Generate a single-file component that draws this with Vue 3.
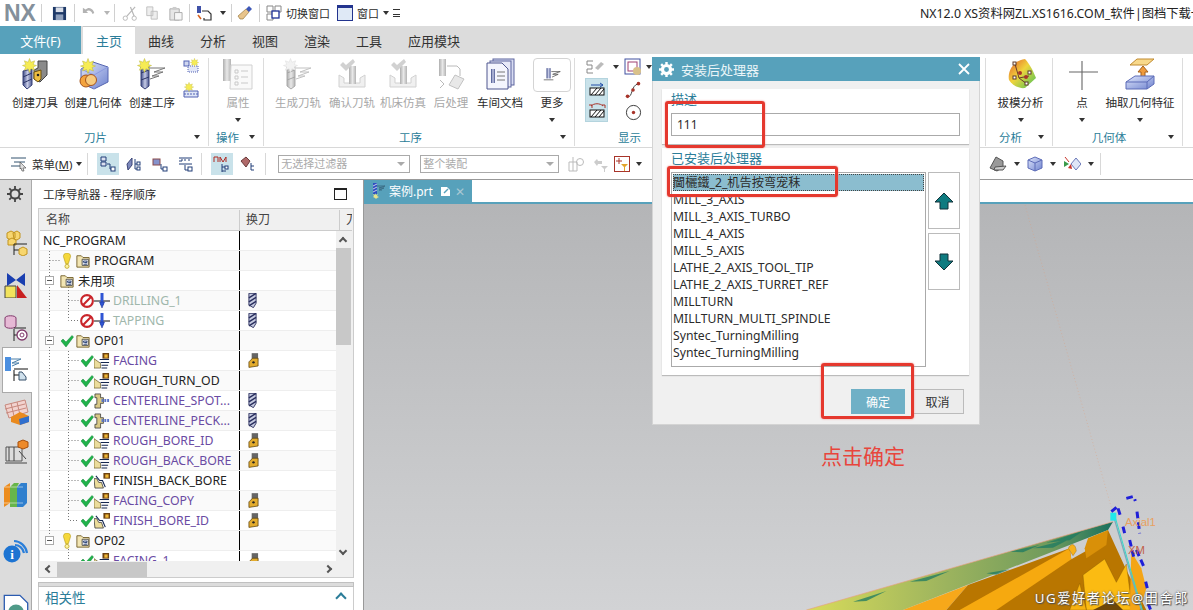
<script setup>
const tabs = ['曲线', '分析', '视图', '渲染', '工具', '应用模块']

// quick access strip, ml is the gap in front of each item
const quick = [
  { sep: true, ml: 0 },
  { icon: 'floppy', size: 15, ml: 10 },
  { sep: true, ml: 7 },
  { icon: 'undo', size: 14, ml: 7 },
  { caret: true, faint: true, ml: 8 },
  { sep: true, ml: 4 },
  { icon: 'cut', size: 15, ml: 7 },
  { icon: 'copy', size: 14, ml: 8 },
  { icon: 'paste', size: 15, ml: 9 },
  { sep: true, ml: 6 },
  { icon: 'job', size: 16, ml: 6 },
  { caret: true, ml: 8 },
  { sep: true, ml: 5 },
  { icon: 'eraser', size: 16, ml: 5 },
  { sep: true, ml: 6 },
  { icon: 'winswitch', size: 16, ml: 6 },
  { text: '切换窗口', ml: 4 },
  { icon: 'win', size: 16, ml: 7 },
  { text: '窗口', ml: 4 },
  { caret: true, ml: 4 },
]

const opButtons = [
  { label: '生成刀轨', icon: 'oper', w: 50, off: true },
  { label: '确认刀轨', icon: 'verify', w: 58, off: true },
  { label: '机床仿真', icon: 'verify', w: 44, off: true },
  { label: '后处理', icon: 'post', w: 52, off: true },
  { label: '车间文档', icon: 'doc', w: 46, off: false },
]

const ok = 'check'
const rows = [
  { name: 'NC_PROGRAM', lvl: 0 },
  { name: 'PROGRAM', lvl: 1, status: 'bulb', icon: 'folder' },
  { name: '未用项', lvl: 1, toggle: true, icon: 'folder' },
  { name: 'DRILLING_1', lvl: 2, status: 'no', icon: 'drillop', tone: 'muted', tool: 'bit' },
  { name: 'TAPPING', lvl: 2, status: 'no', icon: 'drillop', tone: 'muted', tool: 'bit' },
  { name: 'OP01', lvl: 1, toggle: true, status: ok, icon: 'folder' },
  { name: 'FACING', lvl: 2, status: ok, icon: 'faceop', tone: 'violet', tool: 'insert' },
  { name: 'ROUGH_TURN_OD', lvl: 2, status: ok, icon: 'faceop' },
  { name: 'CENTERLINE_SPOT...', lvl: 2, status: ok, icon: 'centerop', tone: 'violet', tool: 'bit' },
  { name: 'CENTERLINE_PECK...', lvl: 2, status: ok, icon: 'centerop', tone: 'violet', tool: 'bit' },
  { name: 'ROUGH_BORE_ID', lvl: 2, status: ok, icon: 'faceop', tone: 'violet', tool: 'insert' },
  { name: 'ROUGH_BACK_BORE', lvl: 2, status: ok, icon: 'faceop', tone: 'violet', tool: 'insert' },
  { name: 'FINISH_BACK_BORE', lvl: 2, status: ok, icon: 'finishop' },
  { name: 'FACING_COPY', lvl: 2, status: ok, icon: 'faceop', tone: 'violet', tool: 'insert' },
  { name: 'FINISH_BORE_ID', lvl: 2, status: ok, icon: 'finishop', tone: 'violet', tool: 'insert' },
  { name: 'OP02', lvl: 1, toggle: true, status: 'bulb', icon: 'folder' },
  { name: 'FACING_1', lvl: 2, status: ok, icon: 'faceop', tone: 'violet', tool: 'insert' },
]

const posts = [
  'MILL_3_AXIS', 'MILL_3_AXIS_TURBO', 'MILL_4_AXIS', 'MILL_5_AXIS',
  'LATHE_2_AXIS_TOOL_TIP', 'LATHE_2_AXIS_TURRET_REF', 'MILLTURN',
  'MILLTURN_MULTI_SPINDLE', 'Syntec_TurningMilling', 'Syntec_TurningMilling',
]

const railIcons = ['railasm', 'railcon', 'railmach', 'railnav', 'railtable', 'railkin', 'railbook', 'railinfo', 'railweb']
</script>

<template>
  <div class="app">
    <svg width="0" height="0" class="defs">
      <defs>
        <linearGradient id="bluebody" x1="0" y1="0" x2="1" y2="1"><stop offset="0" stop-color="#dfe6fb"/><stop offset="1" stop-color="#6f83cf"/></linearGradient>
        <linearGradient id="steel" x1="0" y1="0" x2="1" y2="0"><stop offset="0" stop-color="#3d4a86"/><stop offset=".5" stop-color="#c6cbe6"/><stop offset="1" stop-color="#4b5690"/></linearGradient>
        <linearGradient id="heat" x1="0" y1="0" x2="1" y2="1"><stop offset="0" stop-color="#e35a2b"/><stop offset=".45" stop-color="#f0d43c"/><stop offset="1" stop-color="#46c25a"/></linearGradient>
        <linearGradient id="partgrad" x1="0" y1="0" x2="1" y2="0"><stop offset="0" stop-color="#d9dc5a"/><stop offset=".45" stop-color="#9db45e"/><stop offset=".8" stop-color="#6f9a5c"/><stop offset="1" stop-color="#17705e"/></linearGradient>

        <symbol id="star" viewBox="0 0 32 32"><path d="M16 1l3 8 8-3-3 8 7 2-7 3 3 7-8-3-3 8-3-8-8 3 3-7-7-3 7-2-3-8 8 3z" fill="#f6ec54" stroke="#b9b33a" stroke-width="1"/></symbol>
        <symbol id="tool" viewBox="0 0 32 32"><path d="M4 13l9-2v16l-5 4-4-4z" fill="url(#steel)" stroke="#384279"/><path d="M4 19l9-4M4 25l9-4" stroke="#2e3768"/><path d="M19 3h9v14l-7 7-6-3v-9l4-2z" fill="#8a8a8a" stroke="#444"/><path d="M15 14l7-2v9l-3 3-4-3z" fill="#eebe42" stroke="#6a5010"/><circle cx="19" cy="17" r="1.3" fill="#222"/><use href="#star" x="3" y="0" width="15" height="15"/></symbol>
        <symbol id="geom" viewBox="0 0 32 32"><path d="M4 11l12-7 15 5v15l-14 7-13-6z" fill="url(#bluebody)" stroke="#5565b0"/><path d="M4 11l13 6 14-8M17 17v14" stroke="#8a9ae0" fill="none"/><circle cx="9" cy="23" r="6" fill="#f3a33d" stroke="#a4541d"/><circle cx="14" cy="22" r="5.5" fill="#f8cb7d" stroke="#a4541d"/><use href="#star" x="3" y="0" width="16" height="16"/></symbol>
        <symbol id="oper" viewBox="0 0 32 32"><path d="M5 8h8v20l-4 3-4-3z" fill="url(#steel)" stroke="#384279"/><path d="M5 15l8-3M5 22l8-3" stroke="#2e3768"/><path d="M14 10h15l-11 4h9l-11 4h7l-9 3" fill="none" stroke="#777"/><use href="#star" x="1" y="0" width="15" height="15"/></symbol>
        <symbol id="verify" viewBox="0 0 32 32"><path d="M3 17v12h26V17l-5 3v5H8v-5z" fill="#ddd" stroke="#999"/><rect x="13" y="8" width="7" height="18" fill="url(#steel)"/><path d="M4 7l3-3 3 3 7-6 2 3-9 9z" fill="#999"/></symbol>
        <symbol id="post" viewBox="0 0 32 32"><rect x="4" y="1" width="7" height="17" fill="url(#steel)"/><path d="M12 8h10l3 3v7M5 22l4 4-4 4" fill="none" stroke="#666"/><path d="M14 27l6-10 9 4-6 10z" fill="#ccc" stroke="#777"/></symbol>
        <symbol id="doc" viewBox="0 0 32 32"><rect x="9" y="1" width="21" height="26" fill="#d8dcf2" stroke="#5d659e"/><rect x="6" y="3" width="21" height="26" fill="#e6e8f7" stroke="#5d659e"/><path d="M3 5h15l6 6v20H3z" fill="#f4f5fd" stroke="#4f578f"/><rect x="7" y="11" width="4" height="14" fill="url(#steel)"/><path d="M13 14h8M13 18h8M13 22h8" stroke="#777"/></symbol>
        <symbol id="attr" viewBox="0 0 32 32"><rect x="1" y="1" width="8" height="22" fill="url(#steel)"/><path d="M9 7h21v24H8z" fill="#f1f1f1" stroke="#999"/><path d="M13 12h3v3h-3zM13 18h3v3h-3zM13 24h3v3h-3zM19 13h7M19 19h7M19 25h7" fill="none" stroke="#888"/></symbol>
        <symbol id="more" viewBox="0 0 32 32"><rect x="8" y="6" width="6" height="15" fill="url(#steel)"/><path d="M4 23h14M15 11h13l-11 4h8l-9 4" fill="none" stroke="#444"/></symbol>
        <symbol id="draft" viewBox="0 0 32 32"><path d="M4 22C2 12 10 2 20 1c5 5 9 14 11 19l-11 10C14 31 7 27 4 22z" fill="url(#heat)"/><path d="M10 6l4 14 10-2M14 20l8 6" stroke="#6a3c2d" fill="none"/><g fill="#fff" stroke="#5d3a2b"><rect x="8" y="4" width="3" height="3"/><rect x="8" y="18" width="3" height="3"/><rect x="23" y="13" width="3" height="3"/><rect x="20" y="24" width="3" height="3"/></g><circle cx="15" cy="15" r="2" fill="#a8342a"/><circle cx="21" cy="19" r="2" fill="#a8342a"/></symbol>
        <symbol id="plus" viewBox="0 0 32 32"><path d="M16 3v29M3 14h29" stroke="#666" stroke-width="1.1"/></symbol>
        <symbol id="extract" viewBox="0 0 32 32"><path d="M6 7l7-6h17l-7 6z" fill="#f8d98b" stroke="#c08a30"/><path d="M19 8l5 6h-3v6h-4v-6h-3z" fill="#ef9b3c" stroke="#a4601c"/><path d="M2 24l9-6h19v8l-7 5H2z" fill="url(#bluebody)" stroke="#5d6cb8"/><path d="M2 24h21l7-6M23 24v7" fill="none" stroke="#5d6cb8"/></symbol>

        <symbol id="bulb" viewBox="0 0 14 18"><path d="M7 0c3 0 4 2 4 4L8.5 12h-3L3 4c0-2 1-4 4-4z" fill="#f5d83c" stroke="#b69b16" stroke-width=".7"/><circle cx="7" cy="15" r="2.3" fill="#fdf3a0" stroke="#b69b16" stroke-width=".8"/></symbol>
        <symbol id="no" viewBox="0 0 16 16"><circle cx="8" cy="8" r="6.700" fill="#fff" stroke="#c9252b" stroke-width="2.400"/><path d="M3.500 12.500l9-9" stroke="#c9252b" stroke-width="2.400"/></symbol>
        <symbol id="check" viewBox="0 0 14 14"><path d="M1 7l2-2 3 3 6-6.500 1.500 1.500L6 13z" fill="#1fb24a" stroke="#108536" stroke-width=".5"/></symbol>
        <symbol id="folder" viewBox="0 0 16 16"><path d="M1 2h5l2 2h7v11H1z" fill="#f2e5b3" stroke="#6e5a23"/><path d="M7 6h7v7H7z" fill="#fff" stroke="#444"/><path d="M8.500 8h4v1.500h-4zM10 10h2.500M8.500 11.700h4" fill="none" stroke="#223a70"/></symbol>
        <symbol id="drillop" viewBox="0 0 16 16"><path d="M0 8h16" stroke="#111"/><rect x="6.500" y="0" width="3" height="12" fill="#2f55d4"/><path d="M5.500 9h5l-2.500 6z" fill="#2f55d4" stroke="#1c2f88" stroke-width=".5"/></symbol>
        <symbol id="faceop" viewBox="0 0 17 17"><path d="M0 6l7 5v5H0z" fill="#ebdc9b" stroke="#5d4e1c" stroke-width=".7"/><path d="M6 7h10M7 10h9M8 13h7M8 16h6" stroke="#14264f" stroke-width="1.100"/><rect x="9" y="0" width="7" height="6" fill="#6d4210"/><rect x="11" y="1.500" width="3.500" height="3.500" fill="#f0b737"/></symbol>
        <symbol id="finishop" viewBox="0 0 17 17"><path d="M0 6h3l2 4h3l2 6H1z" fill="#ebdc9b" stroke="#333" stroke-width=".8"/><path d="M2 3l4 5h3l3 7" fill="none" stroke="#14264f" stroke-width="1.200"/><rect x="10" y="0" width="7" height="6" fill="#6d4210"/><rect x="12" y="1.500" width="3.500" height="3.500" fill="#f0b737"/></symbol>
        <symbol id="centerop" viewBox="0 0 17 17"><path d="M1 1h6v4h3v6H7v5H1v-4h2V5H1z" fill="#d9c987" stroke="#333" stroke-width=".8"/><path d="M8 8h8" stroke="#5b76c9" stroke-width="3" stroke-dasharray="2 1"/></symbol>
        <symbol id="bit" viewBox="0 0 10 16"><path d="M1 0h8v11l-3 5-5-3z" fill="#c5cae0" stroke="#2a2f5e"/><path d="M1 5l8-5M1 9.500l8-5M1 14l8-5" stroke="#2a2f5e" stroke-width="1.600"/></symbol>
        <symbol id="insert" viewBox="0 0 12 16"><rect x="4" y="0" width="7" height="9" fill="#666"/><path d="M1 9.500l4-4h6v8.500l-10 1.500z" fill="#e3ac2e" stroke="#5a420e" stroke-width=".8"/><circle cx="6" cy="10" r="1.300" fill="#222"/></symbol>

        <symbol id="gear" viewBox="0 0 16 16"><circle cx="8" cy="8" r="4.500" fill="none" stroke="currentColor" stroke-width="2"/><path d="M8 0v3M8 13v3M0 8h3M13 8h3M2.300 2.300l2 2M11.700 11.700l2 2M2.300 13.700l2-2M11.700 4.300l2-2" stroke="currentColor" stroke-width="1.800"/></symbol>
        <symbol id="gearsolid" viewBox="0 0 16 16"><circle cx="8" cy="8" r="4.300" fill="none" stroke="currentColor" stroke-width="3.400"/><path d="M8 0v3M8 13v3M0 8h3M13 8h3M2.300 2.300l2 2M11.700 11.700l2 2M2.300 13.700l2-2M11.700 4.300l2-2" stroke="currentColor" stroke-width="2.600"/></symbol>
        <symbol id="railasm" viewBox="0 0 24 26"><path d="M3 3l4-2 4 2v5l-4 2-4-2zM9 3l4-2 3 2v5l-3 2-3-1z" fill="#f7d66f" stroke="#c2941f"/><path d="M4 10l4-2 4 2v5H4z" fill="#f7d66f" stroke="#c2941f"/><path d="M10 14v11M10 20h6M10 14h13" stroke="#222"/><path d="M15 19l4-2 4 2v5l-4 2-4-2z" fill="#f7d66f" stroke="#c2941f"/></symbol>
        <symbol id="railcon" viewBox="0 0 24 26"><path d="M3 1l9 7 9-7v13l-9-6-9 6z" fill="#1a3fb0"/><path d="M1 14h11v12H1z" fill="#f2e35c" stroke="#444"/><path d="M13 26l10 0-10-13z" fill="#c82020"/></symbol>
        <symbol id="railmach" viewBox="0 0 24 26"><path d="M1 3c0-3 11-3 11 0v8c0 3-11 3-11 0z" fill="#e6b9d5" stroke="#803a6c"/><path d="M10 14v12M10 20h5M10 13h12" stroke="#222"/><circle cx="18" cy="20" r="5" fill="#fff" stroke="#803a6c" stroke-width="1.300"/><circle cx="18" cy="20" r="2" fill="none" stroke="#803a6c"/></symbol>
        <symbol id="railnav" viewBox="0 0 24 26"><rect x="1" y="1" width="6" height="14" fill="#4b8fe0"/><path d="M7 3h10L8 7h7l-7 3" fill="none" stroke="#4a7ea8"/><path d="M10 14v11M10 19h5M10 13h14" stroke="#111"/><path d="M15 16h3l4 5v3h-7z" fill="#cfe0ec" stroke="#36506b"/></symbol>
        <symbol id="railtable" viewBox="0 0 26 26"><path d="M2 6l20-5 3 12-19 6z" fill="#f2d3cf" stroke="#c7887d"/><path d="M2 10l20-5M3 14l20-5M8 4l3 13M14 3l3 13" stroke="#c7887d"/><path d="M8 18l9-5 9 4v6l-9 3-9-3z" fill="#ea8a1e"/><path d="M16 20l10-3v6l-9 3z" fill="#2f6fce"/></symbol>
        <symbol id="railkin" viewBox="0 0 26 26"><path d="M3 8h16v14H3z" fill="#ddd" stroke="#555"/><path d="M6 8v14M11 8v14M16 12l7 8M2 24h22" stroke="#444" fill="none"/><path d="M15 3l5-2 5 2v5l-5 2-5-2z" fill="#ed8a2b" stroke="#a64f0d"/></symbol>
        <symbol id="railbook" viewBox="0 0 26 26"><path d="M1 5l6-4v20l-6 4z" fill="#ec8c1e"/><path d="M7 5l4-4h5l-2 4v20H7z" fill="#67b54a"/><path d="M14 5l4-4h6v20l-4 4h-6z" fill="#2f7fce"/><path d="M1 5h19M1 21h19" stroke="#fff" stroke-opacity=".5"/></symbol>
        <symbol id="railinfo" viewBox="0 0 26 26"><circle cx="9" cy="16" r="8.500" fill="#1d74d2"/><text x="9" y="21" text-anchor="middle" font-size="13" font-weight="700" fill="#fff" font-family="Liberation Serif, serif">i</text><path d="M11 3c6 0 12 5 13 12M12 7c4 0 8 3 9 8" fill="none" stroke="#2b7fda" stroke-width="2.200"/></symbol>
        <symbol id="railweb" viewBox="0 0 20 20"><path d="M1 1h12l6 6v13H1z" fill="#fff" stroke="#2b5bb0"/><circle cx="10" cy="14" r="6" fill="#4f9a88"/></symbol>

        <symbol id="floppy" viewBox="0 0 16 16"><path d="M1 1h14v14H1z" fill="#1f3a68"/><rect x="4" y="1.500" width="8" height="5" fill="#d9dee8"/><rect x="4" y="9" width="8" height="6" fill="#8fa0bc"/></symbol>
        <symbol id="undo" viewBox="0 0 16 16"><path d="M1 2v6h6L5 6c3-2 6 0 7 3l2-1C13 3 8 0 4 4z" fill="#b3b3b3"/></symbol>
        <symbol id="cut" viewBox="0 0 16 16"><path d="M14 1L5 11M9 1l4 10" stroke="#b8b8b8" stroke-width="1.300" fill="none"/><circle cx="3.500" cy="13" r="2.300" fill="none" stroke="#b8b8b8"/><circle cx="13" cy="13" r="2.300" fill="none" stroke="#b8b8b8"/></symbol>
        <symbol id="copy" viewBox="0 0 16 16"><path d="M2 1h7v10H2zM7 6h7v9H7z" fill="#eee" stroke="#bbb"/></symbol>
        <symbol id="paste" viewBox="0 0 16 16"><path d="M2 3h10v12H2z" fill="#e6e6e6" stroke="#aaa"/><rect x="5" y="1" width="4" height="3" fill="#ccc"/><path d="M7 7h8v8H7z" fill="#f6f6f6" stroke="#aaa"/></symbol>
        <symbol id="job" viewBox="0 0 16 16"><rect x="1" y="1" width="4" height="7" fill="#3f51a8"/><path d="M6 6h6l3 3v6H8v-2" fill="none" stroke="#333" stroke-width="1.200"/><path d="M2 10l3 4" stroke="#d8601d" stroke-width="1.500"/></symbol>
        <symbol id="eraser" viewBox="0 0 16 16"><path d="M1 11l8-7 3 3-6 7H3z" fill="#e8c48c" stroke="#8c6b2e" stroke-width=".6"/><path d="M9 4l3-3 3 3-3 3z" fill="#3e58b8"/></symbol>
        <symbol id="winswitch" viewBox="0 0 16 16"><path d="M1 1h6v6H1zM9 1h6v6H9zM1 9h6v6H1z" fill="#fff" stroke="#888"/><rect x="6" y="6" width="7" height="7" fill="#fff" stroke="#1d2f95" stroke-width="1.300"/></symbol>
        <symbol id="win" viewBox="0 0 16 16"><rect x=".5" y=".5" width="15" height="15" fill="#dfe9f6" stroke="#23348e"/><rect x="1" y="1" width="14" height="2" fill="#23348e"/></symbol>
      </defs>
    </svg>

    <header class="titlebar">
      <span class="logo">NX</span>
      <template v-for="(q, i) in quick" :key="i">
        <i v-if="q.sep" class="sep" :style="{ marginLeft: q.ml + 'px' }"></i>
        <svg v-else-if="q.icon" class="qa" :width="q.size" :height="q.size" :style="{ marginLeft: q.ml + 'px' }"><use :href="'#' + q.icon"/></svg>
        <span v-else-if="q.text" class="qa-text" :style="{ marginLeft: q.ml + 'px' }">{{ q.text }}</span>
        <span v-else class="caret" :class="{ faint: q.faint }" :style="{ marginLeft: q.ml + 'px' }"></span>
      </template>
      <span class="menu-lines"></span>
      <span class="app-title">NX12.0 XS资料网ZL.XS1616.COM_软件|图档下载一站式</span>
    </header>

    <nav class="tabs">
      <span class="file-tab">文件(F)</span>
      <span class="tab active">主页</span>
      <span v-for="t in tabs" :key="t" class="tab">{{ t }}</span>
    </nav>

    <section class="ribbon">
      <div class="group g-blade">
        <div class="btns">
          <div class="rbtn w56"><svg width="32" height="32"><use href="#tool"/></svg><span>创建刀具</span></div>
          <div class="rbtn w60"><svg width="32" height="32"><use href="#geom"/></svg><span>创建几何体</span></div>
          <div class="rbtn w58"><svg width="32" height="32"><use href="#oper"/></svg><span>创建工序</span></div>
          <div class="small-col">
            <svg width="16" height="16" viewBox="0 0 16 16"><rect x="1" y="3" width="5" height="5" fill="#cfd6ef" stroke="#5263b4"/><rect x="5" y="8" width="10" height="6" fill="#e1e6f7" stroke="#5263b4" stroke-dasharray="1 1"/><use href="#star" x="7" y="0" width="9" height="9"/></svg>
            <svg width="16" height="16" viewBox="0 0 16 16"><path d="M1 9h14v6H1z" fill="#dfe6f7" stroke="#5263b4"/><path d="M1 12h14" stroke="#5263b4" stroke-dasharray="2 1"/><use href="#star" x="1" y="0" width="10" height="10"/></svg>
          </div>
        </div>
        <div class="glabel">刀片<span class="caret gcaret"></span></div>
      </div>
      <div class="group g-ops">
        <div class="btns">
          <div class="rbtn off w54"><svg width="32" height="32"><use href="#attr"/></svg><span>属性</span><b class="caret"></b></div>
        </div>
        <div class="glabel">操作<span class="caret gcaret"></span></div>
      </div>
      <div class="group g-proc">
        <div class="btns">
          <div v-for="b in opButtons" :key="b.label" class="rbtn" :class="{ off: b.off }" :style="{ width: b.w + 'px' }">
            <svg width="32" height="32"><use :href="'#' + b.icon"/></svg><span>{{ b.label }}</span>
          </div>
          <div class="rbtn more-btn">
            <div class="more-box"><svg width="22" height="22"><use href="#more"/></svg></div>
            <span>更多</span><b class="caret"></b>
          </div>
        </div>
        <div class="glabel">工序<span class="caret gcaret"></span></div>
      </div>
      <div class="group g-show">
        <div class="show-grid">
          <div class="show-col">
            <div class="show-top">
              <svg width="20" height="14" viewBox="0 0 20 14"><path d="M8 1H2v4h5v4H2v4h6" fill="none" stroke="#888"/><path d="M10 8l6-6 3 2-6 6z" fill="#bbb"/></svg>
              <span class="caret"></span>
            </div>
            <div class="toggled">
              <svg width="18" height="14" viewBox="0 0 18 14"><path d="M3 3h12M12 1l3 2-3 2" fill="none" stroke="#234ea8"/><rect x="2" y="6" width="14" height="7" fill="#fff" stroke="#111"/><path d="M3 13l6-7M7 13l6-7M11 13l5-6" stroke="#111"/></svg>
              <svg width="18" height="16" viewBox="0 0 18 16"><path d="M3 4c3-3 9-3 12 0" fill="none" stroke="#a8342a"/><path d="M1 3h3v3M14 3h3v3" fill="none" stroke="#a8342a"/><rect x="2" y="8" width="14" height="7" fill="#fff" stroke="#111"/><path d="M3 15l6-7M7 15l6-7M11 15l5-6" stroke="#111"/></svg>
            </div>
          </div>
          <div class="show-col right">
            <svg width="18" height="18" viewBox="0 0 18 18"><rect x="1" y="1" width="15" height="15" fill="#fff" stroke="#4050a0"/><rect x="4" y="4" width="9" height="9" fill="none" stroke="#a04070"/><circle cx="13" cy="13" r="4" fill="#d9c18a"/></svg>
            <span class="caret show-caret"></span>
            <svg width="18" height="20" viewBox="0 0 18 22"><path d="M3 18c6 2 3-12 12-14" fill="none" stroke="#333"/><circle cx="3" cy="18" r="2" fill="#a8342a"/><circle cx="9" cy="11" r="2" fill="#a8342a"/><circle cx="15" cy="4" r="2" fill="#a8342a"/></svg>
            <svg width="17" height="17" viewBox="0 0 18 18"><circle cx="9" cy="9" r="7.500" fill="#fff" stroke="#333"/><circle cx="9" cy="9" r="1.800" fill="#a8342a"/></svg>
          </div>
        </div>
        <div class="glabel show-label">显示</div>
      </div>
      <div class="group g-hidden"></div>
      <div class="group g-ana">
        <div class="btns">
          <div class="rbtn w67"><svg width="32" height="32"><use href="#draft"/></svg><span>拔模分析</span><b class="caret"></b></div>
        </div>
        <div class="glabel">分析<span class="caret gcaret"></span></div>
      </div>
      <div class="group g-geo">
        <div class="btns">
          <div class="rbtn w42"><svg width="32" height="32"><use href="#plus"/></svg><span>点</span><b class="caret"></b></div>
          <div class="rbtn w74"><svg width="32" height="32"><use href="#extract"/></svg><span>抽取几何特征</span><b class="caret"></b></div>
        </div>
        <div class="glabel">几何体<span class="caret gcaret"></span></div>
      </div>
    </section>

    <section class="toolbar">
      <svg class="menu-ico" width="18" height="16" viewBox="0 0 18 16"><path d="M1 2h15M4 6h11M1 10h9" stroke="#33536e"/><path d="M10 6l6 6-3 0 1 3-2 0-1-3-1 1z" fill="#ddd" stroke="#444" stroke-width=".6"/></svg>
      <span class="menu-text">菜单(<u>M</u>)</span>
      <span class="caret"></span>
      <i class="tsep first"></i>
      <span class="tb on"><svg width="16" height="16" viewBox="0 0 16 16"><path d="M1 1h5v4H1zM1 6h5v4H1z" fill="#dbe0f0" stroke="#223f78"/><path d="M7 8h3v5h3" fill="none" stroke="#223f78"/><rect x="11" y="11" width="4" height="4" fill="#fff" stroke="#223f78"/></svg></span>
      <span class="tb"><svg width="16" height="16" viewBox="0 0 16 16"><path d="M1 8l5-6v7l-4 5z" fill="#7c88bc" stroke="#3b4476"/><path d="M9 3v10h4M9 8h4" fill="none" stroke="#223f78"/><rect x="11" y="6" width="3" height="3" fill="#fff" stroke="#223f78"/><rect x="11" y="11" width="3" height="3" fill="#fff" stroke="#223f78"/></svg></span>
      <span class="tb"><svg width="16" height="16" viewBox="0 0 16 16"><rect x="1" y="3" width="7" height="6" fill="#8592cc" stroke="#8a4a4a"/><path d="M9 8v5h3" fill="none" stroke="#223f78"/><rect x="11" y="11" width="4" height="4" fill="#fff" stroke="#223f78"/></svg></span>
      <span class="tb"><svg width="16" height="16" viewBox="0 0 16 16"><path d="M1 2h13M1 5h3V3M7 5V3M11 5V3M1 8h13" fill="none" stroke="#223f78"/><path d="M7 9v5h3" fill="none" stroke="#223f78"/><rect x="10" y="11" width="4" height="4" fill="#fff" stroke="#223f78"/></svg></span>
      <i class="tsep second"></i>
      <span class="tb on big"><svg width="18" height="18" viewBox="0 0 18 18"><path d="M1 7V2h4v5M7 7V2l3 5 3-5v5" fill="none" stroke="#b02a22"/><path d="M9 9v8M9 12h4M9 16h4" stroke="#223f78"/><rect x="12" y="11" width="3" height="3" fill="#fff" stroke="#223f78"/></svg></span>
      <span class="tb"><svg width="16" height="16" viewBox="0 0 16 16"><path d="M1 5l5-4 4 4-4 6z" fill="#b06a6a" stroke="#6a3c3c"/><path d="M11 7v7h3M11 10h3" fill="none" stroke="#223f78"/></svg></span>
      <i class="tsep wide"></i>
      <span class="combo c1">无选择过滤器<em></em></span>
      <span class="combo c2">整个装配<em></em></span>
      <span class="tb-off">
        <svg width="16" height="16" viewBox="0 0 16 16"><path d="M1 6h8v9H1zM5 1v14" fill="none" stroke="#bbb"/><circle cx="12" cy="6" r="3.500" fill="none" stroke="#bbb"/></svg>
        <svg width="16" height="16" viewBox="0 0 16 16"><path d="M1 6l3-3 1 2h4v3H5l-1 2zM8 10h7l-3 3v3h-1v-3z" fill="#ccc"/></svg>
      </span>
      <svg class="filter" width="16" height="16" viewBox="0 0 16 16"><rect x=".5" y=".5" width="15" height="15" fill="#fff" stroke="#a8342a"/><path d="M5 2v6M2 5h6" stroke="#a8342a"/><path d="M7 8h7l-3 3v4h-1v-4z" fill="#e2a52b"/></svg>
      <span class="caret"></span>
      <span class="tool-right">
        <svg width="18" height="16" viewBox="0 0 18 16"><path d="M1 12L7 1l7 4v6l-6 4z" fill="#999" stroke="#555"/><path d="M6 11l11-1-3 4H5z" fill="#ccc" stroke="#555"/></svg>
        <span class="caret"></span>
        <svg width="16" height="16" viewBox="0 0 16 16"><path d="M1 4l7-3 7 3v8l-7 3-7-3z" fill="url(#bluebody)" stroke="#5d6cb8"/><path d="M1 4l7 3 7-3M8 7v8" fill="none" stroke="#5d6cb8"/></svg>
        <span class="caret"></span>
        <svg width="18" height="16" viewBox="0 0 18 16"><path d="M8 8l5-6 5 6-5 6z" fill="#dfe6f7" stroke="#6a78b8"/><path d="M1 5l5 3-5 3z" fill="#3a9a4a"/><path d="M5 12l3-4 1 5z" fill="#c8342a"/><path d="M2 1l4 5" stroke="#c8342a"/></svg>
        <span class="caret"></span>
      </span>
      <i class="tsep end"></i>
    </section>

    <main class="main">
      <aside class="rail">
        <svg class="rail-gear" width="16" height="16"><use href="#gear"/></svg>
        <div v-for="r in railIcons" :key="r" class="rail-item" :class="[r, { current: r === 'railnav' }]">
          <svg width="26" height="26"><use :href="'#' + r"/></svg>
        </div>
      </aside>

      <section class="nav">
        <div class="nav-title">
          <span>工序导航器 - 程序顺序</span>
          <i class="maxbox"></i>
        </div>
        <div class="tree">
          <div class="thead">
            <span class="h-name">名称</span><span class="h-tool">换刀</span><span class="h-more">刀</span>
          </div>
          <div class="tbody">
            <div class="rows">
              <svg class="guides" width="296" height="330" viewBox="0 0 296 330">
                <path d="M9.500 20V309M9.500 29.500H20M9.500 49.500H5M9.500 109.500H5M9.500 309.500H5M28.500 50V89.500H39M28.500 69.500H39M28.500 120V289.500H39M28.500 129.500H39M28.500 149.500H39M28.500 169.500H39M28.500 189.500H39M28.500 209.500H39M28.500 229.500H39M28.500 249.500H39M28.500 269.500H39M28.500 318V330" fill="none" stroke="#777" stroke-dasharray="1 2"/>
              </svg>
              <div v-for="(r, i) in rows" :key="i" class="row" :class="{ alt: i % 2 }">
                <div class="cell-name" :class="'lvl' + r.lvl">
                  <span v-if="r.lvl === 1" class="tg"><i v-if="r.toggle" class="minus"></i></span>
                  <svg v-if="r.status" class="st" :class="r.status" width="14" height="16"><use :href="'#' + r.status"/></svg>
                  <svg v-if="r.icon" class="ic" :class="r.icon" width="16" height="16"><use :href="'#' + r.icon"/></svg>
                  <span class="nm" :class="r.tone">{{ r.name }}</span>
                </div>
                <div class="cell-tool">
                  <svg v-if="r.tool" :width="r.tool === 'bit' ? 9 : 11" height="15"><use :href="'#' + r.tool"/></svg>
                </div>
              </div>
            </div>
            <div class="vscroll">
              <span class="chev up"></span>
              <span class="vthumb"></span>
              <span class="chev down"></span>
            </div>
          </div>
          <div class="hscroll">
            <span class="chev left"></span>
            <span class="hthumb"></span>
            <span class="chev right"></span>
          </div>
        </div>
        <div class="splitter"></div>
        <div class="relate"><span>相关性</span><span class="chev up big"></span></div>
      </section>

      <section class="view">
        <div class="doc-tabs">
          <div class="doc-tab">
            <svg width="16" height="16" viewBox="0 0 16 16"><rect x="3" y="0" width="4" height="11" fill="#2f4fc0"/><path d="M3 3l4-2M3 6l4-2M3 9l4-2" stroke="#c6cbe6"/><path d="M7 3h8L9 5h5L9 7h3" fill="none" stroke="#3c6f86"/><path d="M5 10l1 2 2-1-1 2 2 1-2 1-1 1-1-1-2-1 1-1-1-2 2 1z" fill="#e8e48a"/></svg>
            <span>案例.prt</span>
            <svg class="doc-ico" width="11" height="11" viewBox="0 0 11 11"><path d="M1 1h6l3 3v6H1z" fill="#fff"/><path d="M4 7l4-4" stroke="#57a1bb" stroke-width="1.500"/></svg>
            <span class="doc-close">✕</span>
          </div>
        </div>
        <div class="canvas">
          <svg class="part" width="400" height="130" viewBox="0 0 1200 390">
            <path d="M696-825L960 100" stroke="#e4946a" stroke-width="1.500" stroke-dasharray="3 7" fill="none" opacity=".7"/>
            <path d="M40 390L960 125 945 150 330 390z" fill="url(#partgrad)"/>
            <path d="M760 188l110-35-40 28zM650 215l90-20-50 22zM580 280l70-12-40 16zM720 205l110-28-50 26zM350 305l120-32-70 30zM180 365l100-32-60 30z" fill="#1c7a62" opacity=".75"/>
            <path d="M40 390L960 125" stroke="#e8a080" stroke-width="2"/>
            <path d="M330 390L525 315 460 390z" fill="#f7a81a"/>
            <path d="M460 390L525 315 830 205 835 238 875 215 945 150 1000 270 1060 390z" fill="#b97600"/>
            <path d="M500 390L830 205 835 238 610 390z" fill="#f6a90f"/>
            <path d="M885 175l60-25-5 45-60 40-5-30z" fill="#d99008"/>
            <path d="M870 285l65-48 35 70 30-55 18 138H880z" fill="#fbbb12" stroke="#7a5200"/>
            <path d="M830 390l30-80 20 80z" fill="#f7b20f" stroke="#7a5200"/>
            <path d="M900 390l60-30 30 30z" fill="#6e4708"/>
            <path d="M826 205c8-18 22-14 24 8l-10 14z" fill="#f6b11a" stroke="#7a5200"/>
            <path d="M1015 215l30 50 15 60-20 65h-30z" fill="#f4a516"/>
            <path d="M962 110L1045 390" stroke="#7ab" stroke-width="4"/>
            <path d="M966 110L1048 390" stroke="#37d8c8" stroke-width="3"/>
            <rect x="952" y="98" width="18" height="24" fill="#1fe8ea"/>
            <path d="M955 95l18-15M975 85l8 25M990 140l5 20M1000 55l22-6 5 14M1032 95l8 65M1010 180l12 50M1030 210l25 55M1058 305l10 40M1065 370l8 20" stroke="#1f1fd8" stroke-width="9" stroke-dasharray="20 12" fill="none"/>
            <text x="996" y="138" fill="#e8a060" font-size="34" font-family="Liberation Sans, sans-serif">Axial1</text>
            <text x="1005" y="222" fill="#c0604a" font-size="34" font-family="Liberation Sans, sans-serif">XM</text>
          </svg>
          <span class="watermark">UG爱好者论坛@田舍郎</span>
        </div>
      </section>
    </main>

    <div class="dialog">
      <div class="dlg-head">
        <svg class="dlg-gear" width="15" height="15"><use href="#gearsolid"/></svg>
        <span>安装后处理器</span>
        <svg class="dlg-x" width="12" height="12" viewBox="0 0 12 12"><path d="M1 1l10 10M11 1L1 11" stroke="#fff" stroke-width="1.800"/></svg>
      </div>
      <div class="dlg-panel p1">
        <div class="dlg-label">描述</div>
        <div class="dlg-input">111</div>
      </div>
      <div class="dlg-panel p2">
        <div class="dlg-label">已安装后处理器</div>
        <div class="list-wrap">
          <div class="list">
            <div class="item sel">閫欐鐵_2_机告按弯宠秣</div>
            <div v-for="(p, i) in posts" :key="i" class="item">{{ p }}</div>
          </div>
          <div class="side">
            <button class="arrow"><svg width="20" height="20" viewBox="0 0 20 20"><path d="M10 2l9 9h-5v7H6v-7H1z" fill="#0f7b80" stroke="#12333a"/></svg></button>
            <button class="arrow"><svg width="20" height="20" viewBox="0 0 20 20"><path d="M10 18l9-9h-5V2H6v7H1z" fill="#0f7b80" stroke="#12333a"/></svg></button>
          </div>
        </div>
      </div>
      <div class="dlg-foot">
        <button class="btn ok">确定</button>
        <button class="btn cancel">取消</button>
      </div>
    </div>

    <i class="mark m1"></i>
    <i class="mark m2"></i>
    <i class="mark m3"></i>
    <span class="mark-text">点击确定</span>
  </div>
</template>

<style>
html, body { margin: 0; background: #fff; }
</style>

<style scoped>
.app {
  position: relative;
  width: 1193px;
  height: 610px;
  overflow: hidden;
  display: flex;
  flex-direction: column;
  background: #fff;
  color: #2b2b2b;
  font-family: "Noto Sans", "Noto Sans CJK SC", sans-serif;
  font-size: 12px;
}
.defs { position: absolute; }
.caret {
  display: inline-block;
  width: 0;
  height: 0;
  border: 3px solid transparent;
  border-top: 4px solid #333;
  border-bottom: 0;
  flex: none;
}
.caret.faint { border-top-color: #b5b5b5; }

/* title bar */
.titlebar { height: 26px; display: flex; align-items: center; flex: none; }
.logo {
  width: 37px;
  padding-left: 4px;
  font: 700 23px "Liberation Sans", sans-serif;
  color: #84909b;
  flex: none;
}
.sep { width: 1px; height: 18px; background: #d0d0d0; flex: none; }
.qa { flex: none; }
.qa-text { font-size: 11px; white-space: nowrap; }
.menu-lines { width: 7px; height: 4px; margin-left: 4px; border-top: 1px solid #333; border-bottom: 3px double #333; }
.app-title {
  position: absolute;
  left: 920px;
  top: 4px;
  width: 273px;
  overflow: hidden;
  white-space: nowrap;
  font-size: 12.300px;
  color: #222;
}

/* tabs */
.tabs { height: 28px; background: #dcdcdc; display: flex; align-items: stretch; flex: none; }
.file-tab { width: 81px; background: #57a1bb; color: #fff; font-size: 13px; display: flex; align-items: center; justify-content: center; margin-right: 2px; }
.tab { width: 52px; box-sizing: border-box; padding-left: 13px; display: flex; align-items: center; font-size: 13px; color: #333; white-space: nowrap; }
.tab.active { background: #fff; color: #2b7d99; border-top: 1px solid #c8c8c8; }

/* ribbon */
.ribbon { height: 93px; display: flex; flex: none; border-bottom: 1px solid #d8d8d8; box-sizing: content-box; }
.group { position: relative; flex: none; border-right: 1px solid #dcdcdc; height: 88px; margin-top: 4px; box-sizing: border-box; }
.g-blade { width: 209px; padding-left: 7px; }
.g-ops { width: 55px; padding-left: 2px; }
.g-proc { width: 311px; padding-left: 9px; }
.g-show { width: 77px; border-right: 0; }
.g-hidden { width: 334px; }
.g-ana { width: 67px; padding-left: 2px; }
.g-geo { width: 130px; padding-left: 8px; }
.btns { display: flex; align-items: flex-start; }
.rbtn { display: flex; flex-direction: column; align-items: center; flex: none; font-size: 11.5px; white-space: nowrap; color: #2b2b2b; }
.rbtn > svg { margin-bottom: 2px; }
.rbtn span { line-height: 16px; margin-top: 3px; }
.rbtn .caret { margin-top: 7px; }
.rbtn.off span { color: #a8a8a8; }
.rbtn.off svg { filter: grayscale(1) opacity(.45); }
.w42 { width: 42px; } .w54 { width: 54px; } .w56 { width: 56px; } .w58 { width: 58px; } .w60 { width: 60px; } .w67 { width: 65px; } .w74 { width: 74px; }
.small-col { display: flex; flex-direction: column; gap: 8px; margin-left: 2px; }
.more-btn { width: 46px; margin-left: 6px; }
.more-box { width: 38px; height: 34px; box-sizing: border-box; border: 1px solid #d4d4d4; border-radius: 4px; display: flex; align-items: center; justify-content: center; }
.glabel { position: absolute; left: 0; right: 0; bottom: 0; height: 16px; line-height: 16px; text-align: center; color: #2b7d99; font-size: 11.5px; padding-right: 17px; box-sizing: border-box; }
.glabel.show-label { padding: 0 0 0 32px; }
.gcaret { position: absolute; right: 8px; top: 5px; }
.show-grid { display: flex; gap: 5px; padding-left: 10px; }
.show-col { display: flex; flex-direction: column; align-items: flex-start; position: relative; }
.show-col.right { gap: 4px; align-items: center; }
.show-caret { position: absolute; left: 22px; top: 7px; }
.show-top { display: flex; align-items: center; gap: 8px; height: 18px; }
.toggled { margin-top: 2px; background: #c9e2ea; border: 1px solid #b4d4de; width: 23px; height: 44px; box-sizing: border-box; display: flex; flex-direction: column; align-items: center; justify-content: space-around; }

/* toolbar */
.toolbar { height: 31px; flex: none; display: flex; align-items: center; box-sizing: border-box; padding-left: 10px; background: #fff; }
.menu-ico { margin-right: 4px; flex: none; }
.menu-text { font-size: 11.5px; margin-right: 4px; white-space: nowrap; }
.tsep { width: 1px; height: 22px; background: #d8d8d8; margin: 0 9px; flex: none; }
.tsep.first { margin: 0 9px 0 5px; }
.tsep.second { margin: 0 9px 0 0; }
.tsep.wide { margin: 0 12px 0 2px; }
.tsep.end { margin-left: 6px; }
.tb { width: 22px; height: 22px; display: flex; align-items: center; justify-content: center; flex: none; margin-right: 4px; }
.tb.on { background: #c9e2ea; }
.combo { position: relative; height: 18px; line-height: 16px; box-sizing: border-box; border: 1px solid #aaa; color: #aaa; font-size: 11px; padding-left: 2px; margin-right: 10px; flex: none; }
.combo em { position: absolute; right: 4px; top: 6px; width: 0; height: 0; border: 4px solid transparent; border-top: 4px solid #aaa; border-bottom: 0; }
.c1 { width: 132px; }
.c2 { width: 139px; margin-right: 9px; }
.tb-off { display: flex; gap: 9px; margin-right: 5px; flex: none; }
.filter { margin-right: 6px; flex: none; }
.tool-right { display: flex; align-items: center; gap: 7px; margin-left: 347px; flex: none; }

/* main */
.main { flex: 1; min-height: 0; display: flex; border-top: 1px solid #999; }
.rail { width: 32px; flex: none; background: #dcdcdc; box-sizing: border-box; border-right: 1px solid #aaa; position: relative; }
.rail-gear { position: absolute; left: 7px; top: 6px; color: #444; }
.rail-item { position: absolute; left: 3px; width: 26px; height: 26px; }
.railasm { top: 50px; } .railcon { top: 92px; } .railmach { top: 135px; }
.railnav { top: 176px; } .railtable { top: 219px; } .railkin { top: 259px; }
.railbook { top: 302px; } .railinfo { top: 358px; } .railweb { top: 414px; }
.rail-item.current::before {
  content: "";
  position: absolute;
  left: -1px;
  top: -9px;
  width: 30px;
  height: 46px;
  background: #fff;
  border: 1px solid #aaa;
  border-right: 0;
  box-sizing: border-box;
}
.rail-item svg { position: relative; }
.nav { width: 330px; flex: none; display: flex; flex-direction: column; padding-left: 6px; box-sizing: border-box; padding-right: 8px; }
.nav-title { height: 28px; flex: none; display: flex; align-items: center; justify-content: space-between; padding: 0 7px 0 5px; font-size: 11.5px; }
.maxbox { width: 11px; height: 9px; border: 1px solid #222; border-top-width: 2px; }
.tree { border: 1px solid #ccc; flex: none; height: 370px; box-sizing: border-box; padding: 1px 1px 0; background: #f0f0f0; display: flex; flex-direction: column; }
.thead { height: 20px; flex: none; display: flex; background: #f0f0f0; border-bottom: 1px solid #ccc; color: #444; font-size: 12px; line-height: 19px; overflow: hidden; }
.h-name { width: 200px; flex: none; padding-left: 6px; box-sizing: border-box; border-right: 1px solid #ccc; }
.h-tool { width: 100px; flex: none; padding-left: 6px; box-sizing: border-box; border-right: 1px solid #ccc; }
.h-more { padding-left: 6px; flex: none; }
.tbody { height: 330px; flex: none; display: flex; overflow: hidden; background: #fff; }
.rows { position: relative; width: 296px; flex: none; height: 330px; overflow: hidden; }
.guides { position: absolute; left: 0; top: 0; }
.row { height: 20px; box-sizing: border-box; display: flex; border-bottom: 1px solid #eee; background: #fff; }
.row.alt { background: #fafafa; }
.cell-name { position: relative; width: 200px; flex: none; box-sizing: border-box; border-right: 1px solid #000; display: flex; align-items: center; white-space: nowrap; overflow: hidden; }
.lvl0 { padding-left: 3px; }
.lvl1 { padding-left: 5px; }
.lvl2 { padding-left: 40px; }
.tg { width: 15px; flex: none; display: flex; align-items: center; }
.minus { width: 9px; height: 9px; box-sizing: border-box; border: 1px solid #aaa; background: linear-gradient(#555,#555) center/5px 1px no-repeat #fff; }
.st { flex: none; margin-right: 0; }
.lvl1 .st { width: 14px; margin-right: 2px; }
.lvl1 .ic { margin-right: 4px; flex: none; width: 14px; height: 14px; }
.lvl2 .ic { margin-right: 3px; flex: none; }
.nm { font-size: 12.300px; color: #222; }
.nm.muted { color: #9fb7ac; }
.nm.violet { color: #6a4ba3; }
.cell-tool { padding-left: 8px; display: flex; align-items: center; }
.vscroll { width: 17px; flex: none; position: relative; background: #f0f0f0; }
.vthumb { position: absolute; left: 0; top: 17px; width: 15px; height: 97px; background: #c8c8c8; }
.chev { position: absolute; width: 6px; height: 6px; box-sizing: border-box; border: solid #555; border-width: 2px 0 0 2px; }
.chev.up { left: 4px; top: 7px; transform: rotate(45deg); }
.chev.down { left: 4px; bottom: 7px; transform: rotate(225deg); }
.chev.left { left: 6px; top: 5px; transform: rotate(-45deg); }
.chev.right { right: 21px; top: 5px; transform: rotate(135deg); }
.hscroll { height: 16px; flex: none; position: relative; background: #f0f0f0; }
.hthumb { position: absolute; left: 17px; top: 1px; width: 90px; height: 15px; background: #c8c8c8; }
.splitter { height: 5px; flex: none; margin-top: 4px; background: #dcdcdc; border: 1px solid #c0c0c0; box-sizing: border-box; }
.relate { flex: 1; position: relative; display: flex; align-items: center; padding: 0 0 4px 6px; color: #2b7d99; font-size: 13.500px; border: 1px solid #ccc; border-bottom: 0; border-top: 0; }
.chev.big { left: auto; right: 8px; top: 7px; width: 8px; height: 8px; border-color: #2b7d99; }

/* viewport */
.view { flex: 1; min-width: 0; display: flex; flex-direction: column; margin-left: 1px; border-left: 1px solid #999; }
.doc-tabs { height: 24px; flex: none; box-sizing: border-box; border-bottom: 2px solid #57a1bb; }
.doc-tab { width: 108px; height: 22px; background: #57a1bb; color: #fff; display: flex; align-items: center; padding-left: 6px; box-sizing: border-box; font-size: 12px; gap: 3px; }
.doc-ico { margin-left: 4px; }
.doc-close { font-size: 12px; color: #a9c8d4; margin-left: 1px; }
.canvas { flex: 1; position: relative; overflow: hidden; background: linear-gradient(#b4b5b7, #d2d3d5); }
.part { position: absolute; right: 0; bottom: 0; overflow: visible; }
.watermark {
  position: absolute;
  right: 4px;
  bottom: 3px;
  color: #fff;
  font-size: 13.300px;
  letter-spacing: 1.500px;
  white-space: nowrap;
  text-shadow: 0 0 2px #444, 1px 1px 1px #555;
}

/* dialog */
.dialog {
  position: absolute;
  left: 652px;
  top: 57px;
  width: 328px;
  height: 368px;
  background: #f0f0f0;
  box-sizing: border-box;
  border: 1px solid #d4d4d4;
  border-top: 0;
  display: flex;
  flex-direction: column;
}
.dlg-head { height: 24px; flex: none; margin: 0 -1px; background: #57a1bb; color: #fff; display: flex; align-items: center; padding-left: 7px; font-size: 13px; position: relative; }
.dlg-head span { color: #eaf5f8; }
.dlg-gear { margin-right: 7px; color: #fff; }
.dlg-x { position: absolute; right: 10px; top: 6px; }
.dlg-panel { background: #fff; margin: 0 10px 0 9px; box-shadow: 0 1px 1px #bbb; box-sizing: border-box; padding: 0 9px; flex: none; }
.p1 { height: 55px; margin-top: 8px; }
.p2 { height: 227px; margin-top: 4px; }
.dlg-label { height: 24px; line-height: 20px; color: #2b7d99; font-size: 13px; }
.dlg-input { height: 23px; box-sizing: border-box; border: 1px solid #aaa; line-height: 21px; padding-left: 5px; font-size: 12px; }
.list-wrap { display: flex; gap: 2px; }
.list { width: 255px; height: 195px; box-sizing: border-box; border: 1px solid #aaa; padding: 1px; overflow: hidden; }
.item { height: 17px; line-height: 17px; font-size: 12.200px; white-space: nowrap; color: #2b2b2b; }
.item.sel { background: #8bbdcf; outline: 1px dotted #444; outline-offset: -1px; }
.side { display: flex; flex-direction: column; gap: 4px; }
.arrow { width: 32px; height: 57px; padding: 0; background: #fff; border: 1px solid #bbb; display: flex; align-items: center; justify-content: center; }
.dlg-foot { display: flex; justify-content: flex-end; gap: 6px; padding: 14px 15px 0 0; }
.btn { width: 54px; height: 25px; padding: 0; border: 1px solid #bbb; background: #ececec; font: 12px "Noto Sans CJK SC", sans-serif; color: #333; }
.btn.cancel { width: 53px; }
.btn.ok { background: #6fb0c6; border-color: #6fb0c6; color: #fff; }

/* screenshot annotations */
.mark { position: absolute; box-sizing: border-box; border: 3px solid #e5382e; border-radius: 3px; box-shadow: 0 0 2px #e88; }
.m1 { left: 665px; top: 101px; width: 100px; height: 47px; }
.m2 { left: 667px; top: 166px; width: 171px; height: 31px; }
.m3 { left: 821px; top: 363px; width: 93px; height: 56px; }
.mark-text { position: absolute; left: 821px; top: 440px; font: 21px "Noto Sans CJK SC", sans-serif; color: #e8453c; line-height: 30px; }
</style>
